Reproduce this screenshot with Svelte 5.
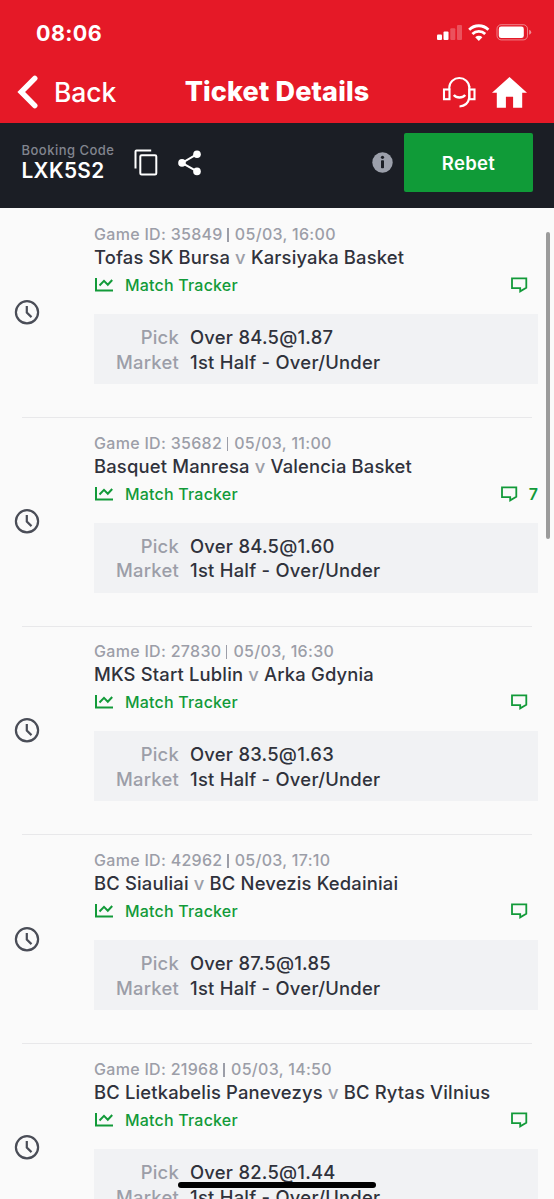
<script lang="ts">
  type Game = {
    id: string
    time: string
    home: string
    away: string
    pick: string
    market: string
    comments?: number
  }

  const bookingCode = 'LXK5S2'

  const games: Game[] = [
    { id: '35849', time: '05/03, 16:00', home: 'Tofas SK Bursa', away: 'Karsiyaka Basket', pick: 'Over 84.5@1.87', market: '1st Half - Over/Under' },
    { id: '35682', time: '05/03, 11:00', home: 'Basquet Manresa', away: 'Valencia Basket', pick: 'Over 84.5@1.60', market: '1st Half - Over/Under', comments: 7 },
    { id: '27830', time: '05/03, 16:30', home: 'MKS Start Lublin', away: 'Arka Gdynia', pick: 'Over 83.5@1.63', market: '1st Half - Over/Under' },
    { id: '42962', time: '05/03, 17:10', home: 'BC Siauliai', away: 'BC Nevezis Kedainiai', pick: 'Over 87.5@1.85', market: '1st Half - Over/Under' },
    { id: '21968', time: '05/03, 14:50', home: 'BC Lietkabelis Panevezys', away: 'BC Rytas Vilnius', pick: 'Over 82.5@1.44', market: '1st Half - Over/Under' }
  ]
</script>

<div class="screen">
  <header>
    <div class="status-bar">
      <span class="clock">08:06</span>
      <svg width="94" height="18" viewBox="0 0 94 18" fill="#fff">
        <rect x="0" y="10.5" width="5" height="5.5" rx="1" />
        <rect x="6.5" y="7.5" width="5" height="8.5" rx="1" />
        <rect x="13.3" y="4.3" width="5" height="11.7" rx="1" opacity=".25" />
        <rect x="20" y="1" width="5" height="15" rx="1" opacity=".25" />
        <g fill="none" stroke="#fff" stroke-width="2.8">
          <path d="M32.2 5.7a13.6 13.6 0 0 1 19.2 0" />
          <path d="M35.4 9.9a9.2 9.2 0 0 1 12.8 0" />
        </g>
        <path d="M38.2 13.2a5.2 5.2 0 0 1 7.2 0l-3.6 3.7z" />
        <rect x="60" y=".7" width="30.5" height="15.2" rx="4.2" fill="none" stroke="#fff" opacity=".45" />
        <rect x="61.8" y="2.5" width="25" height="11.6" rx="2.4" />
        <path d="M92.2 5.8q2 .8 2 2.5t-2 2.5z" opacity=".5" />
      </svg>
    </div>
    <div class="nav">
      <button class="back">
        <svg width="21" height="34" viewBox="0 0 21 34" fill="none" stroke="#fff" stroke-width="5.4" stroke-linecap="round">
          <path d="M17.8 3.4 4.2 17l13.6 13.6" />
        </svg>
        <span>Back</span>
      </button>
      <h1>Ticket Details</h1>
      <div class="nav-icons">
        <svg width="33" height="32" viewBox="0 0 33 32" fill="none" stroke="#fff" stroke-width="2.1">
          <path d="M6.3 13.5v-2C6.3 6 11 2 16.3 2s10 4 10 9.500" />
          <rect x="1" y="13.5" width="5.5" height="9.7" />
          <rect x="26.3" y="13.5" width="5.2" height="9.7" />
          <path d="M26.3 10v11.5c-.8 5-4 8.500-9.800 9" />
          <path d="M10.8 19c2.700 3.400 8.700 3.400 11.400 0" stroke-width="2.4" />
        </svg>
        <svg width="35" height="32" viewBox="0 0 35 32" fill="#fff">
          <path d="M17.5 1 35 16.800h-4.800V31.800h-9.100V20.800h-7.200v11H4.800v-15H0z" />
        </svg>
      </div>
    </div>
  </header>

  <section class="booking">
    <div class="code">
      <span class="label">Booking Code</span>
      <strong>{bookingCode}</strong>
    </div>
    <svg class="copy" width="24" height="28" viewBox="0 0 24 28" fill="none" stroke="#fff" stroke-width="2">
      <path d="M1.5 19.5v-17q0-1 1-1h14.700" />
      <rect x="6.3" y="6.3" width="16" height="19.3" rx="1.3" />
    </svg>
    <svg class="share" width="24" height="26" viewBox="0 0 24 26" fill="#fff">
      <path d="M19 4.200 4 12.900l15 8.500" fill="none" stroke="#fff" stroke-width="2" />
      <circle cx="19" cy="4.2" r="3.8" />
      <circle cx="4" cy="12.9" r="3.8" />
      <circle cx="19" cy="21.4" r="3.8" />
    </svg>
    <svg class="info" width="21" height="21" viewBox="0 0 21 21">
      <circle cx="10.5" cy="10.5" r="10.2" fill="#9ca0ab" />
      <rect x="9" y="8.3" width="3" height="8" rx=".8" fill="#1b1e25" />
      <circle cx="10.5" cy="5.3" r="1.6" fill="#1b1e25" />
    </svg>
    <button class="rebet">Rebet</button>
  </section>

  <main>
    {#each games as game (game.id)}
      <article class="game">
        <svg class="pending" width="26" height="26" viewBox="0 0 26 26" fill="none" stroke="#4a4d57" stroke-width="2.2">
          <circle cx="13" cy="13.3" r="11.1" />
          <path d="M12.8 7v6.500l4.700 4.600" />
        </svg>
        <div class="body">
          <p class="meta">Game ID: {game.id} <i></i> {game.time}</p>
          <h2>{game.home} <span>v</span> {game.away}</h2>
          <div class="links">
            <a class="tracker" href="#tracker">
              <svg width="19" height="14" viewBox="0 0 19 14" fill="none" stroke="#129a39" stroke-width="2">
                <path d="M2 0v12.500h17" />
                <path d="m5.500 7.500 4.500-4.600 3.800 3.800L18.200 2" />
              </svg>
              Match Tracker
            </a>
            <a class="comments" class:empty={!game.comments} href="#comments">
              <svg width="17" height="16" viewBox="0 0 17 16" fill="none" stroke="#129a39" stroke-width="1.8">
                <path d="M1 1.300h14.300v9.500L9.200 14.400v-3.200H1z" />
              </svg>
              {#if game.comments}<b>{game.comments}</b>{/if}
            </a>
          </div>
          <dl>
            <dt>Pick</dt>
            <dd>{game.pick}</dd>
            <dt>Market</dt>
            <dd>{game.market}</dd>
          </dl>
        </div>
      </article>
    {/each}
  </main>

  <div class="scrollbar"></div>
  <div class="home-indicator"></div>
</div>

<style>
  :global(body) {
    overflow: hidden;
  }
  .screen {
    position: relative;
    height: 1199px;
    overflow: hidden;
    background: #fafafa;
    font-family: Inter, 'Liberation Sans', sans-serif;
    color: #30323c;
  }
  svg {
    display: block;
    flex: none;
    overflow: visible;
  }
  button {
    border: 0;
    padding: 0;
    background: none;
    font: inherit;
    color: #fff;
  }
  header {
    height: 123px;
    background: #e51927;
    color: #fff;
  }
  .status-bar {
    display: flex;
    justify-content: space-between;
    align-items: center;
    height: 66px;
    padding: 0 23px 0 36px;
  }
  .clock {
    font-size: 21.5px;
    font-weight: 700;
    letter-spacing: 0.4px;
  }
  .nav {
    display: grid;
    grid-template-columns: 1fr auto 1fr;
    align-items: center;
    height: 51px;
    padding: 0 27px 0 17px;
  }
  .back {
    display: flex;
    align-items: center;
    gap: 16px;
    font-size: 26.5px;
    font-weight: 500;
    letter-spacing: -0.1px;
  }
  h1 {
    margin: 0 -5px 0 5px;
    font-size: 27px;
    font-weight: 800;
    letter-spacing: 0.15px;
    white-space: nowrap;
  }
  .nav-icons {
    display: flex;
    justify-content: flex-end;
    align-items: center;
    gap: 16px;
  }
  .booking {
    display: flex;
    align-items: center;
    height: 85px;
    padding: 0 21px 0 21.5px;
    background: #1b1e25;
    box-sizing: border-box;
  }
  .code {
    width: 112.5px;
    padding-bottom: 6px;
    white-space: nowrap;
  }
  .label {
    display: block;
    font-size: 13px;
    font-weight: 500;
    line-height: 17px;
    letter-spacing: 0.48px;
    color: #82858f;
  }
  .code strong {
    display: block;
    font-size: 20.8px;
    font-weight: 600;
    line-height: 24px;
    letter-spacing: 0.35px;
    color: #fff;
  }
  .copy {
    margin: 0 0 6px;
  }
  .share {
    margin: 0 auto 6px 19.5px;
  }
  .info {
    margin: 0 11px 6px 0;
  }
  .rebet {
    width: 129px;
    height: 59px;
    margin-bottom: 6px;
    border-radius: 2px;
    background: #109b38;
    font-size: 18.5px;
    font-weight: 600;
    letter-spacing: 0.3px;
  }
  .game {
    position: relative;
    display: flex;
    align-items: center;
    gap: 67px;
    height: 208.75px;
    padding: 0 16px 0 14px;
    box-sizing: border-box;
  }
  .game::after {
    content: '';
    position: absolute;
    left: 22px;
    right: 22px;
    bottom: -1px;
    height: 1px;
    background: #e8e8ea;
  }
  .body {
    flex: 1;
    margin-left: -13px;
    padding-bottom: 17px;
  }
  .meta {
    margin: 0;
    font-size: 16px;
    font-weight: 500;
    line-height: 20px;
    letter-spacing: 0.3px;
    color: #9c9ea8;
  }
  .meta i {
    display: inline-block;
    width: 1.5px;
    height: 14px;
    margin-right: 1.5px;
    background: #9c9ea8;
    vertical-align: -2px;
  }
  h2 {
    margin: 0;
    font-size: 18.4px;
    font-weight: 500;
    line-height: 26px;
    letter-spacing: 0.17px;
    white-space: nowrap;
  }
  h2 span {
    color: #9c9ea8;
  }
  .links {
    display: flex;
    justify-content: space-between;
    align-items: center;
    height: 20px;
    margin-top: 5px;
    font-size: 16px;
    font-weight: 500;
  }
  .links a {
    display: flex;
    align-items: center;
    color: #129a39;
    text-decoration: none;
  }
  .tracker {
    gap: 12px;
    letter-spacing: 0.2px;
  }
  .comments {
    gap: 11px;
  }
  .comments.empty {
    margin-right: 10px;
  }
  .comments b {
    font-weight: 600;
  }
  dl {
    display: grid;
    grid-template-columns: 85px 1fr;
    column-gap: 11px;
    height: 70px;
    margin: 19px 0 0;
    padding-top: 11px;
    box-sizing: border-box;
    background: #f1f2f4;
    font-size: 18.4px;
    font-weight: 500;
    grid-auto-rows: 24.7px;
    line-height: 24.7px;
    letter-spacing: 0.25px;
  }
  dt {
    text-align: right;
    color: #9c9ea8;
  }
  dd {
    margin: 0;
  }
  .scrollbar {
    position: absolute;
    top: 232px;
    right: 4px;
    width: 4px;
    height: 307px;
    border-radius: 2px;
    background: #9b9b9b;
  }
  .home-indicator {
    position: absolute;
    left: 178px;
    bottom: 11px;
    width: 198px;
    height: 6px;
    border-radius: 3px;
    background: #000;
  }
</style>
